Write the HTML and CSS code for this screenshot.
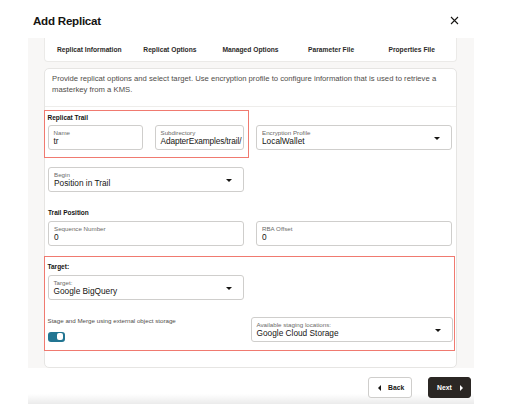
FILE: index.html
```html
<!DOCTYPE html>
<html>
<head>
<meta charset="utf-8">
<link rel="stylesheet" href="styles.css">
</head>
<body>
<div class="dialog">
  <header class="header">
    <h1 class="title">Add Replicat</h1>
    <svg class="close" width="9" height="9" viewBox="0 0 9 9"><path d="M1 1L8 8M8 1L1 8" stroke="#161513" stroke-width="1.1" fill="none"/></svg>
  </header>
  <div class="panel">
    <nav class="tabs">
      <span class="tab">Replicat Information</span>
      <span class="tab">Replicat Options</span>
      <span class="tab">Managed Options</span>
      <span class="tab">Parameter File</span>
      <span class="tab">Properties File</span>
    </nav>
    <section class="card">
      <p class="desc">Provide replicat options and select target. Use encryption profile to configure information that is used to retrieve a masterkey from a KMS.</p>
      <div class="row1">
        <div class="redbox box1">
          <div class="group-label">Replicat Trail</div>
          <div class="pair">
            <div class="field w-name"><span class="flabel">Name</span><span class="fvalue">tr</span></div>
            <div class="field w-sub"><span class="flabel">Subdirectory</span><span class="fvalue tight">AdapterExamples/trail/</span></div>
          </div>
        </div>
        <div class="field select w-col enc"><span class="flabel">Encryption Profile</span><span class="fvalue">LocalWallet</span><span class="caret"></span></div>
      </div>
      <div class="field select w-col begin"><span class="flabel">Begin</span><span class="fvalue">Position in Trail</span><span class="caret"></span></div>
      <div class="group-label tp">Trail Position</div>
      <div class="cols">
        <div class="field w-col"><span class="flabel">Sequence Number</span><span class="fvalue">0</span></div>
        <div class="field w-col"><span class="flabel">RBA Offset</span><span class="fvalue">0</span></div>
      </div>
      <div class="redbox box2">
        <div class="group-label">Target:</div>
        <div class="field select w-col target"><span class="flabel">Target:</span><span class="fvalue">Google BigQuery</span><span class="caret"></span></div>
        <div class="stage-row">
          <div class="stage">
            <div class="stage-label">Stage and Merge using external object storage</div>
            <div class="toggle"><span class="knob"></span></div>
          </div>
          <div class="field select w-stage"><span class="flabel">Available staging locations:</span><span class="fvalue">Google Cloud Storage</span><span class="caret"></span></div>
        </div>
      </div>
    </section>
  </div>
  <footer class="footer">
    <button class="btn back"><span class="tri-left"></span>Back</button>
    <button class="btn next">Next<span class="tri-right"></span></button>
  </footer>
</div>
</body>
</html>
```
FILE: styles.css
```css
* { box-sizing: border-box; }
html, body { margin: 0; padding: 0; background: #fff; }
body {
  width: 511px;
  height: 410px;
  overflow: hidden;
  font-family: "Liberation Sans", Arial, sans-serif;
  color: #161513;
}
.header {
  height: 38px;
  display: flex;
  align-items: center;
  justify-content: space-between;
  padding: 2px 52px 0 33px;
}
.title {
  margin: 0;
  font-size: 11.6px;
  font-weight: bold;
  letter-spacing: -0.25px;
}
.close { display: block; }
.panel {
  margin-left: 28px;
  width: 446px;
  height: 330px;
  background: #f8f7f6;
  padding: 0 17px 0 16px;
  display: flex;
  flex-direction: column;
  gap: 6px;
}
.tabs {
  height: 24px;
  background: #fff;
  border: 1px solid #ebeae8;
  border-top: none;
  border-radius: 0 0 4px 4px;
  display: grid;
  grid-template-columns: repeat(5, 1fr);
  align-items: center;
  padding: 0 4px;
}
.tab {
  text-align: center;
  font-size: 6.7px;
  font-weight: bold;
  color: #2b2a28;
  padding-bottom: 1px;
}
.card {
  flex: 1;
  background: #fff;
  border: 1px solid #e6e5e3;
  border-radius: 5px;
  padding: 0 4px 0 3px;
}
.desc {
  margin: 0 -4px 0 -3px;
  padding: 4px 6px 11px 7px;
  font-size: 7.7px;
  line-height: 11px;
  color: #4f4d4a;
  border-bottom: 1px solid #eeedeb;
}
.row1 {
  display: flex;
  align-items: flex-start;
  margin-top: 3px;
}
.redbox {
  border: 1.5px solid #f07a70;
  margin-left: -4px;
}
.box1 {
  width: 205px;
  height: 48px;
  padding: 1.5px 3.5px 0 2.5px;
}
.group-label {
  font-size: 6.5px;
  font-weight: bold;
  line-height: 9px;
  color: #161513;
}
.box1 .group-label { margin-bottom: 3px; }
.pair { display: flex; gap: 12px; }
.field {
  position: relative;
  height: 25px;
  border: 1px solid #cfcecc;
  border-radius: 3px;
  background: #fff;
  padding: 3px 6px 0 5px;
  overflow: hidden;
  white-space: nowrap;
  display: flex;
  flex-direction: column;
}
.flabel {
  font-size: 6.2px;
  line-height: 7px;
  color: #6b6a68;
}
.fvalue {
  font-size: 8.3px;
  line-height: 11px;
  color: #161513;
}
.fvalue.tight { letter-spacing: -0.12px; }
.w-name { width: 95px; }
.w-sub { width: 89px; }
.w-col { width: 196px; }
.w-stage { width: 202px; }
.enc { margin: 15px 0 0 7px; }
.begin { margin-top: 9px; }
.tp { margin-top: 16px; margin-bottom: 4px; }
.cols { display: flex; gap: 12px; }
.caret {
  position: absolute;
  right: 11px;
  top: 11px;
  width: 0;
  height: 0;
  border-left: 3px solid transparent;
  border-right: 3px solid transparent;
  border-top: 3.5px solid #161513;
}
.box2 {
  margin-top: 10px;
  width: 411px;
  height: 95px;
  padding: 5px 1.5px 0 2.5px;
}
.box2 .group-label { margin-bottom: 3.5px; }
.stage-row {
  display: flex;
  justify-content: space-between;
  align-items: flex-start;
  margin-top: 17px;
}
.stage-label {
  font-size: 6.2px;
  line-height: 8px;
  color: #4f4d4a;
}
.toggle {
  margin-top: 7px;
  width: 17px;
  height: 10px;
  border-radius: 3px;
  background: #227592;
  position: relative;
}
.knob {
  position: absolute;
  right: 1.5px;
  top: 1.5px;
  width: 6px;
  height: 7px;
  border-radius: 2px;
  background: #fff;
}
.footer {
  margin-left: 28px;
  width: 446px;
  height: 36px;
  display: flex;
  justify-content: flex-end;
  align-items: flex-start;
  gap: 16px;
  padding: 9px 3px 0 0;
  background: linear-gradient(to bottom, #fff 0%, #fff 72%, #ebebeb 100%);
}
.btn {
  height: 21px;
  border-radius: 3px;
  font-family: "Liberation Sans", Arial, sans-serif;
  font-size: 6.8px;
  font-weight: bold;
  display: flex;
  align-items: center;
  padding: 0;
  margin: 0;
}
.back {
  width: 44px;
  background: #fff;
  border: 1px solid #cfcecc;
  color: #161513;
  padding-left: 9px;
  gap: 7px;
}
.next {
  width: 43px;
  background: #2b2724;
  border: 1px solid #2b2724;
  color: #fff;
  padding-left: 8px;
  gap: 8px;
}
.tri-left {
  width: 0; height: 0;
  border-top: 3px solid transparent;
  border-bottom: 3px solid transparent;
  border-right: 3.5px solid #161513;
}
.tri-right {
  width: 0; height: 0;
  border-top: 3px solid transparent;
  border-bottom: 3px solid transparent;
  border-left: 3.5px solid #fff;
}
```
